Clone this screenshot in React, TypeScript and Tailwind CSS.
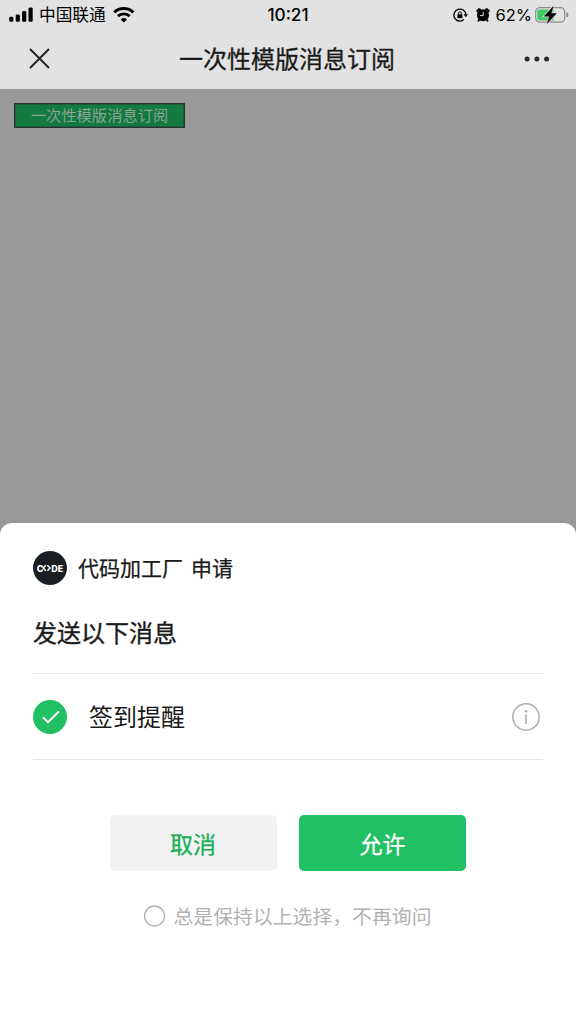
import React, { useState } from 'react';

function StatusBar() {
    return (
        <div className="relative flex h-[30px] items-center justify-between pl-[9px] pr-[7px] text-black">
            <div className="flex items-center pb-[1px]">
                <svg width="24" height="15" viewBox="0 0 24 15" fill="currentColor">
                    <rect x="0.2" y="9.8" width="4.2" height="5" rx="1.3" />
                    <rect x="6.7" y="7.4" width="4.2" height="7.4" rx="1.3" />
                    <rect x="13.1" y="4" width="4.2" height="10.8" rx="1.3" />
                    <rect x="19.5" y="0.5" width="4.2" height="14.3" rx="1.3" />
                </svg>
                <span className="ml-[6px] text-[16.7px] leading-[29px]">中国联通</span>
                <svg className="ml-[7px]" width="22" height="16" viewBox="0 0 22 16" fill="none" stroke="currentColor">
                    <path d="M1.3 5.3A14 14 0 0 1 20.3 5.3" strokeWidth="3" />
                    <path d="M4.9 9.1A8.7 8.7 0 0 1 16.7 9.1" strokeWidth="2.8" />
                    <path d="M10.8 15.6L7.7 12.5A4.5 4.5 0 0 1 13.9 12.5Z" fill="currentColor" stroke="none" />
                </svg>
            </div>
            <span className="absolute left-1/2 -translate-x-1/2 font-[Inter] text-[17.2px] font-medium leading-[30px]">10:21</span>
            <div className="flex items-center">
                {/* rotation lock */}
                <svg width="16" height="14" viewBox="0 0 16 14" fill="none" stroke="currentColor">
                    <path d="M10.9 11.6A6 6 0 1 1 12.9 6.4" strokeWidth="1.3" />
                    <path d="M10.6 6.2H15L12.8 9.3Z" fill="currentColor" stroke="none" />
                    <rect x="4.4" y="6.2" width="5" height="4" rx="0.6" fill="currentColor" stroke="none" />
                    <path d="M5.5 6.5V5.2A1.4 1.4 0 0 1 8.3 5.2V6.5" strokeWidth="1" />
                </svg>
                {/* alarm */}
                <svg className="ml-[7px]" width="14" height="14" viewBox="0 0 14 14">
                    <path d="M2.4 12.8L3.9 11M11.6 12.8L10.1 11" stroke="currentColor" strokeWidth="1.8" strokeLinecap="round" />
                    <path d="M1 4.3L0.8 2.2L2.8 0.6L4.9 1.2ZM13 4.3L13.2 2.2L11.2 0.6L9.1 1.2Z" fill="currentColor" stroke="currentColor" strokeWidth="0.8" strokeLinejoin="round" />
                    <circle cx="7" cy="7.3" r="6" fill="currentColor" />
                    <path d="M7.2 3.8V7.6H4.1" fill="none" stroke="#e2e2e2" strokeWidth="1" />
                </svg>
                <span className="ml-[6px] font-[Inter] text-[16.5px] leading-[30px]">62%</span>
                <svg className="ml-[3px]" width="34" height="18" viewBox="0 0 34 18">
                    <rect x="0.7" y="1.6" width="29" height="14.6" rx="4.2" fill="none" stroke="#8c8c8c" strokeWidth="1.2" />
                    <path d="M4.7 3.4H18.6V14.4H4.7A2.4 2.4 0 0 1 2.3 12V5.8A2.4 2.4 0 0 1 4.7 3.4Z" fill="#3fca62" />
                    <path d="M31.4 6.2A2.8 2.8 0 0 1 31.4 11.6Z" fill="#8c8c8c" />
                    <path d="M18.2 0.6L9.2 10.2H14.4L12.2 17.4L21.4 7.6H16.2Z" fill="#000" stroke="#e2e2e2" strokeWidth="2" />
                    <path d="M18.2 0.6L9.2 10.2H14.4L12.2 17.4L21.4 7.6H16.2Z" fill="#000" stroke="#000" strokeWidth="0.5" />
                </svg>
            </div>
        </div>
    );
}

function NavBar() {
    return (
        <div className="flex h-[59px] items-center justify-between pb-[2px] pl-[29px] pr-[26px] text-[#1a1a1a]">
            <svg width="21" height="21" viewBox="0 0 21 21" stroke="#222" strokeWidth="1.9">
                <path d="M1 1L20 20M20 1L1 20" />
            </svg>
            <h1 className="pb-[2px] text-[24px] leading-none [-webkit-text-stroke:0.3px]">一次性模版消息订阅</h1>
            <svg width="26" height="6" viewBox="0 0 26 6" fill="#2a2a2a">
                <circle cx="3.1" cy="3" r="2.5" />
                <circle cx="12.9" cy="3" r="2.5" />
                <circle cx="22.6" cy="3" r="2.5" />
            </svg>
        </div>
    );
}

function Logo() {
    return (
        <div className="flex size-[34px] items-center justify-center rounded-full bg-[#1b1f24] font-[Inter] text-[9px] font-extrabold leading-none text-white">
            <span>C</span>
            <svg className="-ml-px shrink-0" width="9" height="8" viewBox="0 0 9 8" fill="none" stroke="currentColor" strokeWidth="1.5">
                <path d="M3.8 1.2L1.2 4L3.8 6.8M5.4 1.2L8 4L5.4 6.8" />
            </svg>
            <span>DE</span>
        </div>
    );
}

export default function App() {
    const [checked, setChecked] = useState(true);
    const [always, setAlways] = useState(false);

    return (
        <div className="flex h-[1024px] w-[576px] flex-col overflow-hidden bg-[#999999] font-['Noto_Sans_CJK_SC',sans-serif]">
            <header className="h-[89px] shrink-0 bg-[#e2e2e2]">
                <StatusBar />
                <NavBar />
            </header>

            <main className="h-[434px] shrink-0 pl-[14px] pt-[14px]">
                <button className="flex h-[25px] w-[171px] items-center justify-center border border-[#2b332e] bg-[#137a40] pb-[1px] text-[15.3px] leading-none text-[#8aa392] outline-1 -outline-offset-2 outline-[#2b332e]/40">
                    一次性模版消息订阅
                </button>
            </main>

            <section className="flex-1 rounded-t-[12px] bg-white px-[33px] pt-[28px] text-[#1a1a1a]">
                <div className="flex h-[34px] items-center">
                    <Logo />
                    <p className="ml-[11px] pb-[2px] text-[21px] leading-none [-webkit-text-stroke:0.25px]">
                        代码加工厂<span className="ml-[8px]">申请</span>
                    </p>
                </div>
                <h2 className="mt-[35px] text-[24px] leading-[24px] [-webkit-text-stroke:0.35px]">发送以下消息</h2>

                <div className="mt-[29px] flex h-[87px] items-center border-y border-[#e6e6e6] pr-[3px]">
                    <button onClick={() => setChecked(!checked)} className="flex size-[34px] items-center justify-center rounded-full bg-[#22c064]">
                        {checked && (
                            <svg className="ml-px mt-px" width="20" height="16" viewBox="0 0 20 16" fill="none" stroke="#fff" strokeWidth="2">
                                <path d="M1.8 8.2L7 13.2L18 2.4" />
                            </svg>
                        )}
                    </button>
                    <span className="ml-[22px] pb-[2px] text-[24px] leading-none">签到提醒</span>
                    <svg className="ml-auto" width="28" height="28" viewBox="0 0 28 28" fill="none" stroke="#adadad">
                        <circle cx="14" cy="14" r="13.2" strokeWidth="1.5" />
                        <path d="M14 11.5V21" strokeWidth="1.6" />
                        <circle cx="14" cy="8.2" r="1.3" fill="#adadad" stroke="none" />
                    </svg>
                </div>

                <div className="mt-[55px] flex justify-center gap-[22px] text-[23px] [-webkit-text-stroke:0.25px]">
                    <button className="h-[56px] w-[167px] rounded-[5px] bg-[#f2f2f2] pr-[1px] text-[#16ae56]">取消</button>
                    <button className="h-[56px] w-[167px] rounded-[5px] bg-[#22c064] text-white">允许</button>
                </div>

                <button onClick={() => setAlways(!always)} className="mx-auto mt-[34px] flex items-center pr-[1px] text-[19.85px] leading-[22px] text-[#b2b2b2]">
                    <svg width="22" height="22" viewBox="0 0 22 22" fill="none" stroke="#b2b2b2">
                        <circle cx="10.5" cy="11" r="10" strokeWidth="1.4" />
                        {always && <circle cx="10.5" cy="11" r="5" fill="#22c064" stroke="none" />}
                    </svg>
                    <span className="ml-[8px]">总是保持以上选择，不再询问</span>
                </button>
            </section>
        </div>
    );
}
